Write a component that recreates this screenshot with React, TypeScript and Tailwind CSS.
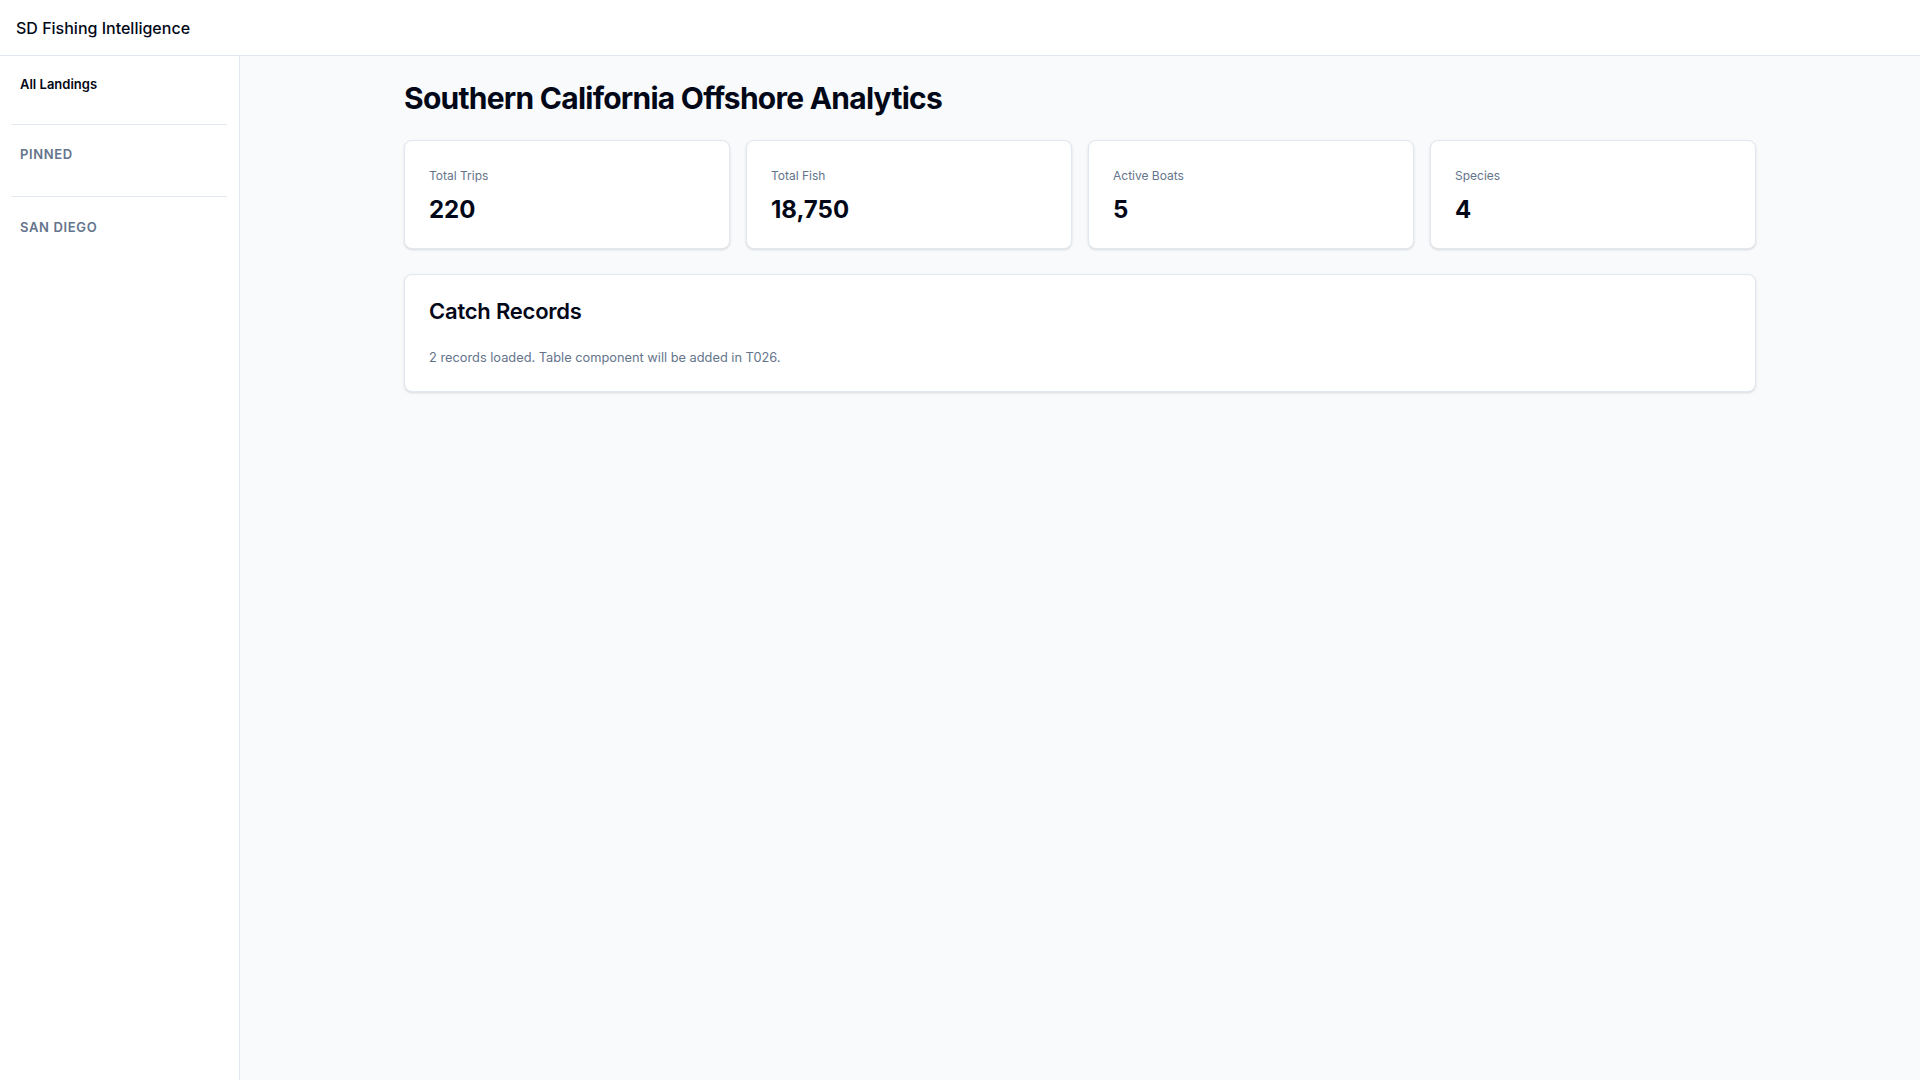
import React from "react";

const stats = [
  { label: "Total Trips", value: "220" },
  { label: "Total Fish", value: "18,750" },
  { label: "Active Boats", value: "5" },
  { label: "Species", value: "4" },
];

export default function App() {
  return (
    <div
      className="flex h-screen flex-col bg-[#f8fafc] text-[#020817]"
      style={{ fontFamily: "Inter, 'Liberation Sans', sans-serif" }}
    >
      <header className="flex h-[56px] shrink-0 items-center border-b border-[#e2e8f0] bg-white px-4">
        <h1 className="pt-[1px] text-base font-medium">SD Fishing Intelligence</h1>
      </header>
      <div className="flex min-h-0 flex-1">
        <aside className="w-[240px] shrink-0 border-r border-[#e2e8f0] bg-white px-3 pt-3">
          <div className="px-2 py-2 text-[13px] font-semibold leading-4">All Landings</div>
          <div className="mt-[24px] border-t border-[#e2e8f0] pt-[21px] pb-[34px]">
            <div className="px-2 text-[13px] font-semibold uppercase leading-4 tracking-wider text-[#64748b]">Pinned</div>
          </div>
          <div className="border-t border-[#e2e8f0] pt-[22px]">
            <div className="px-2 text-[13px] font-semibold uppercase leading-4 tracking-wider text-[#64748b]">San Diego</div>
          </div>
        </aside>
        <main className="flex-1 overflow-auto">
          <div className="mx-auto max-w-[1400px] px-6 pt-6">
            <h2 className="text-3xl font-bold tracking-tight">Southern California Offshore Analytics</h2>
            <div className="mt-6 grid grid-cols-4 gap-4">
              {stats.map((s) => (
                <div key={s.label} className="rounded-lg border border-[#e2e8f0] bg-white px-6 pt-[25px] pb-[23px] shadow-sm">
                  <div className="text-xs leading-5 text-[#64748b]">{s.label}</div>
                  <div className="mt-[9px] text-2xl font-bold leading-[30px]">{s.value}</div>
                </div>
              ))}
            </div>
            <div className="mt-[25px] rounded-lg border border-[#e2e8f0] bg-white px-6 pt-6 pb-[23px] shadow-sm">
              <h3 className="text-[22px] font-semibold leading-6 tracking-[-0.01em]">Catch Records</h3>
              <p className="mt-[25px] text-[12.8px] leading-5 text-[#64748b]">
                2 records loaded. Table component will be added in T026.
              </p>
            </div>
          </div>
        </main>
      </div>
    </div>
  );
}
